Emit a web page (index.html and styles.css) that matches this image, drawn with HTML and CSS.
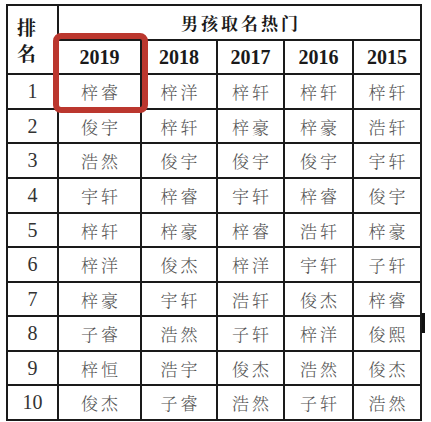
FILE: index.html
```html
<!DOCTYPE html>
<html lang="zh-CN">
<head>
<meta charset="utf-8">
<title>男孩取名热门</title>
<link rel="stylesheet" href="styles.css">
</head>
<body>
<div class="page">
  <div class="table">
    <div class="cell rank-head"><span class="rank-char">排</span><span class="rank-char">名</span></div>
    <div class="cell title">男孩取名热门</div>
    <div class="cell year">2019</div>
    <div class="cell year">2018</div>
    <div class="cell year">2017</div>
    <div class="cell year">2016</div>
    <div class="cell year">2015</div>

    <div class="cell num">1</div><div class="cell name">梓睿</div><div class="cell name">梓洋</div><div class="cell name">梓轩</div><div class="cell name">梓轩</div><div class="cell name">梓轩</div>
    <div class="cell num">2</div><div class="cell name">俊宇</div><div class="cell name">梓轩</div><div class="cell name">梓豪</div><div class="cell name">梓豪</div><div class="cell name">浩轩</div>
    <div class="cell num">3</div><div class="cell name">浩然</div><div class="cell name">俊宇</div><div class="cell name">俊宇</div><div class="cell name">俊宇</div><div class="cell name">宇轩</div>
    <div class="cell num">4</div><div class="cell name">宇轩</div><div class="cell name">梓睿</div><div class="cell name">宇轩</div><div class="cell name">梓睿</div><div class="cell name">俊宇</div>
    <div class="cell num">5</div><div class="cell name">梓轩</div><div class="cell name">梓豪</div><div class="cell name">梓睿</div><div class="cell name">浩轩</div><div class="cell name">梓豪</div>
    <div class="cell num">6</div><div class="cell name">梓洋</div><div class="cell name">俊杰</div><div class="cell name">梓洋</div><div class="cell name">宇轩</div><div class="cell name">子轩</div>
    <div class="cell num">7</div><div class="cell name">梓豪</div><div class="cell name">宇轩</div><div class="cell name">浩轩</div><div class="cell name">俊杰</div><div class="cell name">梓睿</div>
    <div class="cell num">8</div><div class="cell name">子睿</div><div class="cell name">浩然</div><div class="cell name">子轩</div><div class="cell name">梓洋</div><div class="cell name">俊熙</div>
    <div class="cell num">9</div><div class="cell name">梓恒</div><div class="cell name">浩宇</div><div class="cell name">俊杰</div><div class="cell name">浩然</div><div class="cell name">俊杰</div>
    <div class="cell num">10</div><div class="cell name">俊杰</div><div class="cell name">子睿</div><div class="cell name">浩然</div><div class="cell name">子轩</div><div class="cell name">浩然</div>
  </div>
  <div class="highlight"></div>
  <div class="edge-mark"></div>
</div>
</body>
</html>
```
FILE: styles.css
```css
html, body {
  margin: 0;
  padding: 0;
  background: #ffffff;
}

.page {
  position: relative;
  width: 431px;
  height: 422px;
  overflow: hidden;
}

.table {
  margin: 4px 0 0 6px;
  width: 416px;
  display: grid;
  grid-template-columns: 49px 81px 74px 65px 67px 66px;
  grid-template-rows: 33px 32px 33px 32px 33px 33px 32px 33px 32px 33px 32px 33px;
  gap: 2px;
  padding: 2px;
  box-sizing: border-box;
  background: #1a1a1a;
}

.cell {
  background: #ffffff;
  display: flex;
  align-items: center;
  justify-content: center;
  color: #333;
}

.rank-head {
  grid-row: span 2;
  flex-direction: column;
  gap: 5px;
  padding-right: 12px;
  font-family: "Noto Serif CJK SC", "Noto Sans CJK SC", serif;
  font-weight: 700;
  font-size: 19px;
  color: #1a1a1a;
}

.rank-char {
  display: block;
  line-height: 21px;
}

.title {
  grid-column: span 5;
  font-family: "Noto Serif CJK SC", "Noto Sans CJK SC", serif;
  font-weight: 700;
  font-size: 17px;
  letter-spacing: 3px;
  padding-left: 3px;
  color: #1a1a1a;
}

.year {
  font-family: "Liberation Serif", serif;
  font-weight: 700;
  font-size: 20px;
  color: #1a1a1a;
}

.num {
  font-family: "Liberation Serif", serif;
  font-size: 20px;
  color: #333;
}

.name {
  font-family: "Noto Serif CJK SC", "Noto Sans CJK SC", serif;
  font-weight: 300;
  font-size: 17px;
  letter-spacing: 3px;
  padding-left: 3px;
  color: #555;
}

.highlight {
  position: absolute;
  left: 53px;
  top: 33px;
  width: 95px;
  height: 80px;
  box-sizing: border-box;
  border: 6px solid #bb372e;
  border-radius: 8px;
}

.edge-mark {
  position: absolute;
  left: 422px;
  top: 313px;
  width: 3px;
  height: 20px;
  background: #111;
}
```
